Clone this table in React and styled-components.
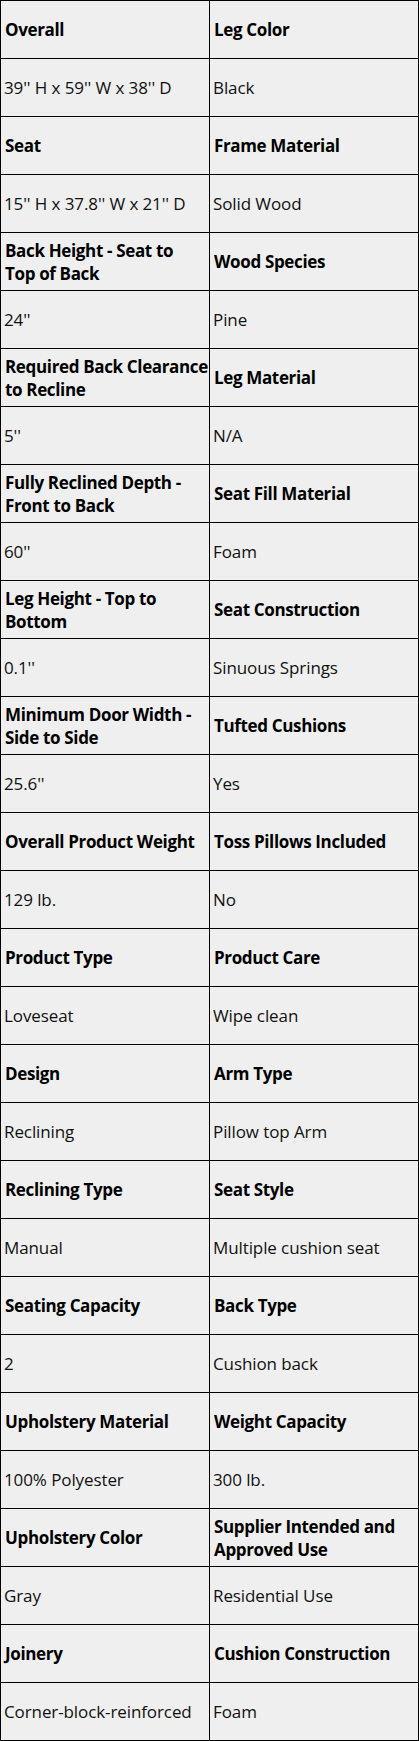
import React from 'react';
import styled, { createGlobalStyle } from 'styled-components';

const GlobalStyle = createGlobalStyle`
  html, body {
    margin: 0;
    padding: 0;
    background: #efefef;
  }
`

const Table = styled.table`
  width: 419px;
  border-collapse: collapse;
  table-layout: fixed;
  background: #efefef;
  font-family: "Open Sans", "Noto Sans", sans-serif;
  font-size: 17px;
  color: #000;
`

// labels carry their own line breaks so they wrap where the sheet does
const Cell = styled.td`
  height: 57px;
  padding: 0 1px 0 ${props => (props.head ? '4px' : '3px')};
  border: 1px solid #000;
  vertical-align: middle;
  line-height: 23px;
  white-space: pre-line;
  font-weight: ${props => (props.head ? 700 : 400)};
  letter-spacing: ${props => (props.head ? '-0.35px' : '-0.1px')};
  color: ${props => (props.head ? '#000' : '#111')};
`

const specs = [
  ['Overall', '39\'\' H x 59\'\' W x 38\'\' D', 'Leg Color', 'Black'],
  ['Seat', '15\'\' H x 37.8\'\' W x 21\'\' D', 'Frame Material', 'Solid Wood'],
  ['Back Height - Seat to\nTop of Back', '24\'\'', 'Wood Species', 'Pine'],
  ['Required Back Clearance\nto Recline', '5\'\'', 'Leg Material', 'N/A'],
  ['Fully Reclined Depth -\nFront to Back', '60\'\'', 'Seat Fill Material', 'Foam'],
  ['Leg Height - Top to\nBottom', '0.1\'\'', 'Seat Construction', 'Sinuous Springs'],
  ['Minimum Door Width -\nSide to Side', '25.6\'\'', 'Tufted Cushions', 'Yes'],
  ['Overall Product Weight', '129 lb.', 'Toss Pillows Included', 'No'],
  ['Product Type', 'Loveseat', 'Product Care', 'Wipe clean'],
  ['Design', 'Reclining', 'Arm Type', 'Pillow top Arm'],
  ['Reclining Type', 'Manual', 'Seat Style', 'Multiple cushion seat'],
  ['Seating Capacity', '2', 'Back Type', 'Cushion back'],
  ['Upholstery Material', '100% Polyester', 'Weight Capacity', '300 lb.'],
  ['Upholstery Color', 'Gray', 'Supplier Intended and\nApproved Use', 'Residential Use'],
  ['Joinery', 'Corner-block-reinforced', 'Cushion Construction', 'Foam'],
]

const App = () => {
  return (
    <>
      <GlobalStyle />
      <Table>
        <tbody>
          {specs.map(([leftLabel, leftValue, rightLabel, rightValue]) => (
            <React.Fragment key={leftLabel}>
              <tr>
                <Cell head>{leftLabel}</Cell>
                <Cell head>{rightLabel}</Cell>
              </tr>
              <tr>
                <Cell>{leftValue}</Cell>
                <Cell>{rightValue}</Cell>
              </tr>
            </React.Fragment>
          ))}
        </tbody>
      </Table>
    </>
  )
}

export default App;
